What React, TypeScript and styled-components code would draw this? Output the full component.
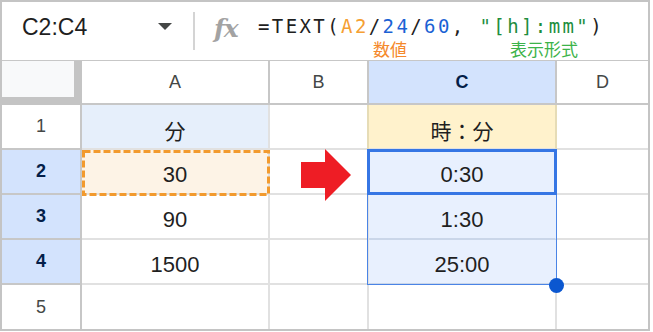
import React from "react";
import styled, { createGlobalStyle } from "styled-components";

const Global = createGlobalStyle`
  html, body { margin: 0; padding: 0; background: #ffffff; }
  body { font-family: "Liberation Sans", Arial, sans-serif; }
`;

const Frame = styled.div`
  width: 650px;
  height: 331px;
  box-sizing: border-box;
  border: 2px solid #c4c4c4;
  display: flex;
  flex-direction: column;
  overflow: hidden;
  background: #fff;
`;

const FormulaBar = styled.div`
  flex: none;
  height: 59px;
  box-sizing: border-box;
  border-bottom: 1px solid #c7c7c7;
  display: flex;
  align-items: flex-start;
`;

const NameBox = styled.div`
  width: 191px;
  height: 51px;
  box-sizing: border-box;
  padding: 0 21px 0 20px;
  display: flex;
  align-items: center;
  justify-content: space-between;
`;

const NameText = styled.span`
  font-family: "Liberation Sans", Arial, sans-serif;
  font-size: 23px;
  line-height: 1;
  color: #1f1f1f;
`;

const DropArrow = styled.span`
  width: 0;
  height: 0;
  border-left: 7.5px solid transparent;
  border-right: 7.5px solid transparent;
  border-top: 7px solid #444746;
  margin-top: -2px;
`;

const Divider = styled.div`
  width: 2px;
  height: 38px;
  margin-top: 10px;
  background: #d4d4d4;
`;

const FxIcon = styled.span`
  width: 28px;
  margin-left: 19px;
  margin-top: 14px;
  font-family: "DejaVu Serif", "Liberation Serif", serif;
  font-style: italic;
  font-weight: bold;
  font-size: 25px;
  line-height: 1;
  color: #a3a3a3;
  letter-spacing: -1px;
`;

const FormulaBlock = styled.div`
  margin-left: 16px;
  margin-top: 12px;
  display: flex;
  flex-direction: column;
`;

const FormulaLine = styled.div`
  font-family: "DejaVu Sans Mono", monospace;
  font-size: 19px;
  letter-spacing: 2.4px;
  line-height: 24px;
  color: #1f1f1f;
  white-space: pre;
`;

const Token = styled.span<{ $c: string }>`
  color: ${(p) => p.$c};
`;

const AnnotationLine = styled.div`
  display: flex;
  margin-top: 2px;
  font-family: "Noto Sans CJK JP", sans-serif;
  font-size: 17px;
  line-height: 17px;
  white-space: nowrap;
`;

const Annotation = styled.span<{ $c: string; $offset: number }>`
  color: ${(p) => p.$c};
  margin-left: ${(p) => p.$offset}px;
`;

const Sheet = styled.div`
  flex: none;
  display: grid;
  grid-template-columns: 80px 188px 99px 188px 91px;
  grid-template-rows: 44px repeat(4, 45px) 44px;
`;

const Corner = styled.div`
  box-sizing: border-box;
  background: #f8f9fa;
  border-right: 8px solid #c4c4c4;
  border-bottom: 8px solid #c4c4c4;
`;

const ColHeader = styled.div<{ $selected?: boolean; $last?: boolean }>`
  box-sizing: border-box;
  border-right: ${(p) => (p.$last ? "none" : "2px solid #c7c7c7")};
  border-bottom: 2px solid #c7c7c7;
  background: ${(p) => (p.$selected ? "#d3e3fd" : "#ffffff")};
  color: ${(p) => (p.$selected ? "#041e49" : "#444746")};
  font-weight: ${(p) => (p.$selected ? "bold" : "normal")};
  font-size: 18px;
  display: flex;
  align-items: center;
  justify-content: center;
`;

const RowHeader = styled.div<{ $selected?: boolean; $last?: boolean }>`
  box-sizing: border-box;
  border-right: 2px solid #c7c7c7;
  border-bottom: ${(p) => (p.$last ? "none" : "2px solid #c7c7c7")};
  background: ${(p) => (p.$selected ? "#d3e3fd" : "#ffffff")};
  color: ${(p) => (p.$selected ? "#041e49" : "#444746")};
  font-weight: ${(p) => (p.$selected ? "bold" : "normal")};
  font-size: 18px;
  display: flex;
  align-items: center;
  justify-content: center;
`;

type Tone = "plain" | "blue" | "yellow" | "copy" | "range";

const toneBg: Record<Tone, string> = {
  plain: "#ffffff",
  blue: "#e6effb",
  yellow: "#fff2cc",
  copy: "#fdf3e6",
  range: "#e8f0fe",
};

const Cell = styled.div<{ $tone?: Tone; $last?: boolean; $bottom?: boolean }>`
  position: relative;
  box-sizing: border-box;
  background: ${(p) => toneBg[p.$tone || "plain"]};
  border-right: ${(p) =>
    p.$last
      ? "none"
      : p.$tone === "yellow"
      ? "2px solid #e6dcb6"
      : p.$tone === "range"
      ? "2px solid #e8f0fe"
      : "2px solid #e1e1e1"};
  border-bottom: ${(p) =>
    p.$bottom ? "none" : p.$tone === "range" ? "2px solid #cad6e9" : "2px solid #e1e1e1"};
  box-shadow: ${(p) => (p.$tone === "yellow" ? "-2px 0 0 #e6dcb6" : "none")};
  display: flex;
  align-items: flex-end;
  justify-content: center;
  padding-bottom: 7px;
  font-size: 22px;
  line-height: 22px;
  color: #1f1f1f;
`;

const CjkText = styled.span`
  font-family: "Noto Sans CJK JP", sans-serif;
  font-size: 21px;
  line-height: 22px;
`;

const RangeOutline = styled.div`
  position: absolute;
  z-index: 2;
  top: -1px;
  left: -2px;
  right: -2px;
  bottom: -92px;
  border: 1px solid #4a84e6;
  pointer-events: none;
`;

const ActiveOutline = styled.div`
  position: absolute;
  z-index: 3;
  top: -1px;
  left: -2px;
  right: -2px;
  bottom: -2px;
  border: 3px solid #3676e4;
  pointer-events: none;
`;

const FillHandle = styled.div`
  position: absolute;
  z-index: 4;
  right: -8.5px;
  bottom: -10px;
  width: 15px;
  height: 15px;
  border-radius: 50%;
  background: #0b57d0;
`;

const Marquee = styled.svg`
  position: absolute;
  z-index: 2;
  top: 0;
  left: 0;
  overflow: visible;
`;

const Arrow = styled.svg`
  position: absolute;
  z-index: 2;
  top: -1px;
  left: 31px;
`;

export default function App() {
  return (
    <>
      <Global />
      <Frame>
        <FormulaBar>
          <NameBox>
            <NameText>C2:C4</NameText>
            <DropArrow />
          </NameBox>
          <Divider />
          <FxIcon>fx</FxIcon>
          <FormulaBlock>
            <FormulaLine>
              <Token $c="#1f1f1f">=TEXT(</Token>
              <Token $c="#f5a033">A2</Token>
              <Token $c="#1f1f1f">/</Token>
              <Token $c="#1b62d4">24</Token>
              <Token $c="#1f1f1f">/</Token>
              <Token $c="#1b62d4">60</Token>
              <Token $c="#1f1f1f">, </Token>
              <Token $c="#1e8e3e">"[h]:mm"</Token>
              <Token $c="#1f1f1f">)</Token>
            </FormulaLine>
            <AnnotationLine>
              <Annotation $c="#f5892c" $offset={115}>
                数値
              </Annotation>
              <Annotation $c="#3cb34a" $offset={103}>
                表示形式
              </Annotation>
            </AnnotationLine>
          </FormulaBlock>
        </FormulaBar>

        <Sheet>
          <Corner />
          <ColHeader>A</ColHeader>
          <ColHeader>B</ColHeader>
          <ColHeader $selected>C</ColHeader>
          <ColHeader $last>D</ColHeader>

          <RowHeader>1</RowHeader>
          <Cell $tone="blue">
            <CjkText>分</CjkText>
          </Cell>
          <Cell />
          <Cell $tone="yellow">
            <CjkText>時：分</CjkText>
          </Cell>
          <Cell $last />

          <RowHeader $selected>2</RowHeader>
          <Cell $tone="copy">
            30
            <Marquee width="188" height="46" viewBox="0 0 188 46">
              <rect
                x="1.5"
                y="1.5"
                width="185"
                height="43"
                fill="none"
                stroke="#f29a2e"
                strokeWidth="3"
                strokeDasharray="7 3"
              />
            </Marquee>
          </Cell>
          <Cell>
            <Arrow width="50" height="52" viewBox="0 0 50 52">
              <polygon points="0,13 24,13 24,0 50,26 24,52 24,39 0,39" fill="#ee1d25" />
            </Arrow>
          </Cell>
          <Cell $tone="range">
            0:30
            <RangeOutline />
            <ActiveOutline />
          </Cell>
          <Cell $last />

          <RowHeader $selected>3</RowHeader>
          <Cell>90</Cell>
          <Cell />
          <Cell $tone="range">1:30</Cell>
          <Cell $last />

          <RowHeader $selected>4</RowHeader>
          <Cell>1500</Cell>
          <Cell />
          <Cell $tone="range">
            25:00
            <FillHandle />
          </Cell>
          <Cell $last />

          <RowHeader $last>5</RowHeader>
          <Cell $bottom />
          <Cell $bottom />
          <Cell $bottom />
          <Cell $bottom $last />
        </Sheet>
      </Frame>
    </>
  );
}
